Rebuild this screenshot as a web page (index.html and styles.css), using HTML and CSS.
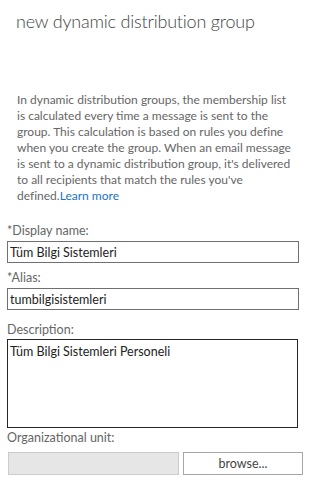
FILE: index.html
```html
<!DOCTYPE html>
<html lang="tr">
<head>
    <meta charset="UTF-8">
    <meta name="viewport" content="width=device-width, initial-scale=1.0">
    <title>new dynamic distribution group</title>
    <link rel="stylesheet" href="styles.css">
</head>
<body>

    <!-- Header -->
    <h1 class="page-title">new dynamic distribution group</h1>

    <!-- Intro text -->
    <p class="intro">In dynamic distribution groups, the membership list<br>
        is calculated every time a message is sent to the<br>
        group. This calculation is based on rules you define<br>
        when you create the group. When an email message<br>
        is sent to a dynamic distribution group, it's delivered<br>
        to all recipients that match the rules you've<br>
        defined.<a href="#" class="learn-more">Learn more</a></p>

    <!-- Form -->
    <form class="group-form">
        <label class="field-label" for="displayName">*Display name:</label>
        <input class="text-field" id="displayName" type="text" value="Tüm Bilgi Sistemleri">

        <label class="field-label" for="alias">*Alias:</label>
        <input class="text-field" id="alias" type="text" value="tumbilgisistemleri">

        <label class="field-label desc-label" for="description">Description:</label>
        <textarea class="text-area" id="description">Tüm Bilgi Sistemleri Personeli</textarea>

        <label class="field-label ou-label">Organizational unit:</label>
        <div class="ou-row">
            <input class="ou-field" type="text" disabled>
            <button type="button" class="browse-btn">browse...</button>
        </div>
    </form>

</body>
</html>
```

FILE: styles.css
```css
body {
    margin: 0;
    padding: 0;
    background-color: #ffffff;
    font-family: Lato, "Noto Sans", sans-serif;
    color: #333333;
    overflow: hidden;
}

.page-title {
    margin: 0;
    padding: 8px 0 0 16px;
    font-family: Lato, "Open Sans", sans-serif;
    font-weight: 300;
    font-size: 18px;
    letter-spacing: -0.2px;
    line-height: 26px;
    color: #444444;
}

.intro {
    margin: 58px 0 0 17px;
    font-size: 12px;
    line-height: 16px;
    color: #666666;
    white-space: nowrap;
}

.learn-more {
    color: #1a73c8;
    text-decoration: none;
}

.group-form {
    display: flex;
    flex-direction: column;
    align-items: flex-start;
    padding: 0 0 0 7px;
    margin-top: 19px;
}

.field-label {
    font-size: 12.5px;
    line-height: 16px;
    color: #666666;
    margin-bottom: 2px;
}

.text-field {
    box-sizing: border-box;
    height: 22px;
    width: 292px;
    margin: 0 0 7px 0;
    padding: 0 2px;
    border: 1px solid #707070;
    font-family: inherit;
    font-size: 12.5px;
    color: #222222;
    outline: none;
}

.desc-label {
    margin-top: 5px;
    margin-bottom: 1px;
}

.text-area {
    box-sizing: border-box;
    width: 291px;
    height: 89px;
    margin: 0;
    padding: 4px 2px;
    border: 1px solid #262626;
    font-family: inherit;
    font-size: 12.5px;
    line-height: 16px;
    color: #222222;
    resize: none;
    outline: none;
}

.ou-label {
    margin-top: 2px;
}

.ou-row {
    display: flex;
    gap: 4px;
    margin-top: 4px;
}

.ou-field {
    box-sizing: border-box;
    width: 171px;
    height: 23px;
    margin: 0 0 0 1px;
    background-color: #e6e6e6;
    border: 1px solid #cccccc;
}

.browse-btn {
    box-sizing: border-box;
    width: 120px;
    height: 23px;
    background-color: #ffffff;
    border: 1px solid #a6a6a6;
    font-family: inherit;
    font-size: 12.5px;
    color: #444444;
    padding: 0;
}
```
